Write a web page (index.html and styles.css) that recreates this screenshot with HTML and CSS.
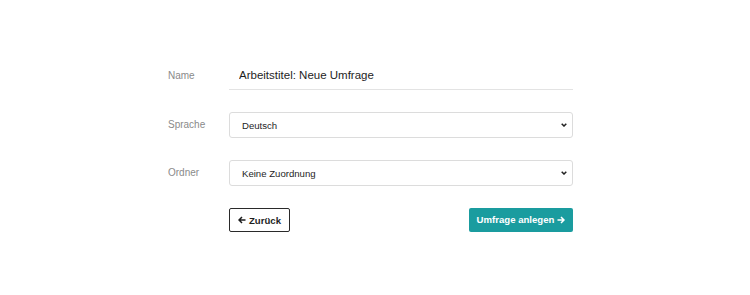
FILE: index.html
```html
<!DOCTYPE html>
<html lang="de">
<head>
<meta charset="utf-8">
<title>Neue Umfrage</title>
<link rel="stylesheet" href="styles.css">
</head>
<body>
<form class="form">
  <div class="row">
    <label class="label" for="name">Name</label>
    <div class="field">
      <input id="name" class="text-input" type="text" value="Arbeitstitel: Neue Umfrage">
    </div>
  </div>
  <div class="row">
    <label class="label" for="lang">Sprache</label>
    <div class="field select-wrap">
      <select id="lang" class="select"><option>Deutsch</option></select>
      <svg class="chev" width="6" height="4" viewBox="0 0 6 4"><path d="M0.7 0.7 L3 3 L5.3 0.7" fill="none" stroke="#222" stroke-width="1.5"/></svg>
    </div>
  </div>
  <div class="row">
    <label class="label" for="folder">Ordner</label>
    <div class="field select-wrap">
      <select id="folder" class="select"><option>Keine Zuordnung</option></select>
      <svg class="chev" width="6" height="4" viewBox="0 0 6 4"><path d="M0.7 0.7 L3 3 L5.3 0.7" fill="none" stroke="#222" stroke-width="1.5"/></svg>
    </div>
  </div>
  <div class="row">
    <div class="label"></div>
    <div class="field actions">
      <button type="button" class="btn btn-back">
        <svg class="arrow" width="8" height="8" viewBox="0 0 8 8"><path d="M7.5 4 H1 M4 1 L1 4 L4 7" fill="none" stroke="currentColor" stroke-width="1.5"/></svg>
        Zurück
      </button>
      <button type="button" class="btn btn-create">
        Umfrage anlegen
        <svg class="arrow" width="8" height="8" viewBox="0 0 8 8"><path d="M0.5 4 H7 M4 1 L7 4 L4 7" fill="none" stroke="currentColor" stroke-width="1.5"/></svg>
      </button>
    </div>
  </div>
</form>
</body>
</html>
```
FILE: styles.css
```css
html, body {
  margin: 0;
  padding: 0;
  background: #ffffff;
}

body {
  font-family: "Liberation Sans", Arial, sans-serif;
  color: #222;
}

.form {
  width: 405px;
  margin: 62px 0 0 168px;
  display: flex;
  flex-direction: column;
  gap: 22px;
}

.row {
  display: flex;
  align-items: center;
}

.label {
  width: 61px;
  flex: none;
  font-size: 10px;
  color: #8a8a8a;
  margin-top: -2px;
}

.field {
  flex: 1;
  min-width: 0;
}

.text-input {
  box-sizing: border-box;
  width: 100%;
  height: 28px;
  border: none;
  border-bottom: 1px solid #e3e3e3;
  padding: 0 0 2px 10px;
  font-family: inherit;
  font-size: 11.5px;
  color: #1e1e1e;
  outline: none;
  background: transparent;
}

.select-wrap {
  position: relative;
}

.select {
  box-sizing: border-box;
  width: 100%;
  height: 26px;
  -webkit-appearance: none;
  appearance: none;
  border: 1px solid #dcdcdc;
  border-radius: 3px;
  background: #fff;
  padding: 0 0 0 12px;
  font-family: inherit;
  font-size: 9.6px;
  color: #1e1e1e;
  outline: none;
}

.chev {
  position: absolute;
  right: 6px;
  top: 11px;
  pointer-events: none;
}

.actions {
  display: flex;
  justify-content: space-between;
  align-items: center;
  margin-top: -1px;
}

.btn {
  display: inline-flex;
  align-items: center;
  gap: 3px;
  height: 24px;
  box-sizing: border-box;
  border-radius: 2px;
  font-family: inherit;
  font-weight: bold;
  font-size: 9.6px;
  cursor: pointer;
}

.btn-back {
  width: 61px;
  justify-content: center;
  border: 1px solid #2a2a2a;
  background: #fff;
  color: #1e1e1e;
  padding: 0;
  margin-top: 1px;
}

.btn-create {
  width: 104px;
  justify-content: center;
  border: none;
  background: #1a9c9f;
  color: #fff;
  padding: 0;
}

.arrow {
  flex: none;
}
```
